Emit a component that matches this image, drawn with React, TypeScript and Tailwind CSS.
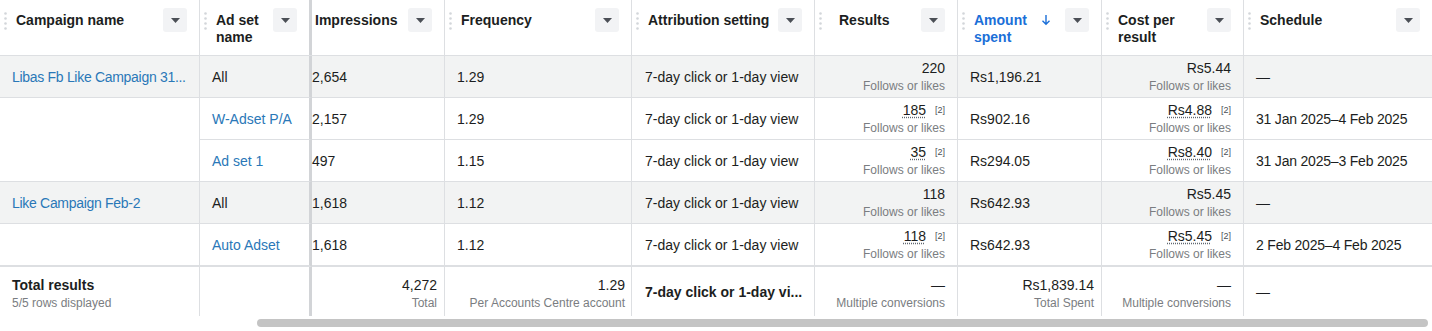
import React from 'react';

type Row = {
  camp: string;
  adset: string;
  link: boolean;
  gray: boolean;
  imp: string;
  freq: string;
  res: string;
  cpr: string;
  amt: string;
  sched: string;
  note: boolean;
  campBorder: boolean;
  last: boolean;
};

const rows: Row[] = [
  { camp: 'Libas Fb Like Campaign 31...', adset: 'All', link: false, gray: true, imp: '2,654', freq: '1.29', res: '220', amt: 'Rs1,196.21', cpr: 'Rs5.44', sched: '—', note: false, campBorder: true, last: false },
  { camp: '', adset: 'W-Adset P/A', link: true, gray: false, imp: '2,157', freq: '1.29', res: '185', amt: 'Rs902.16', cpr: 'Rs4.88', sched: '31 Jan 2025–4 Feb 2025', note: true, campBorder: false, last: false },
  { camp: '', adset: 'Ad set 1', link: true, gray: false, imp: '497', freq: '1.15', res: '35', amt: 'Rs294.05', cpr: 'Rs8.40', sched: '31 Jan 2025–3 Feb 2025', note: true, campBorder: true, last: false },
  { camp: 'Like Campaign Feb-2', adset: 'All', link: false, gray: true, imp: '1,618', freq: '1.12', res: '118', amt: 'Rs642.93', cpr: 'Rs5.45', sched: '—', note: false, campBorder: true, last: false },
  { camp: '', adset: 'Auto Adset', link: true, gray: false, imp: '1,618', freq: '1.12', res: '118', amt: 'Rs642.93', cpr: 'Rs5.45', sched: '2 Feb 2025–4 Feb 2025', note: true, campBorder: true, last: true },
];

// column widths, right border included
const W = {
  camp: 'w-[200px] border-r border-r-[#dddfe2]',
  adset: 'w-[112px] border-r-[3px] border-r-[#d2d4d7]',
  imp: 'w-[133px] border-r border-r-[#dddfe2]',
  freq: 'w-[187px] border-r border-r-[#dddfe2]',
  attr: 'w-[183px] border-r border-r-[#dddfe2]',
  res: 'w-[143px] border-r border-r-[#dddfe2]',
  amt: 'w-[144px] border-r border-r-[#dddfe2]',
  cpr: 'w-[142px] border-r border-r-[#dddfe2]',
  sched: 'w-[188px]',
};

const DragHandle = () => (
  <svg className="absolute left-[4px] top-[12px]" width="3" height="20" viewBox="0 0 3 20" aria-hidden="true">
    {[1.5, 6.5, 11.5, 16.5].map((y) => (
      <circle key={y} cx="1.5" cy={y} r="1.3" fill="#d3d6da" />
    ))}
  </svg>
);

const MenuButton = () => (
  <div className="flex h-6 w-6 shrink-0 items-center justify-center rounded-[3px] bg-[#f2f3f5]">
    <svg width="9" height="5" viewBox="0 0 9 5" aria-hidden="true">
      <path d="M0 0h9L4.5 5z" fill="#4b4f56" />
    </svg>
  </div>
);

function HeaderCell({ w, label, handle = true, pad = 'pl-4', blue = false, sorted = false }: { w: string; label: string; handle?: boolean; pad?: string; blue?: boolean; sorted?: boolean }) {
  return (
    <div className={`relative flex h-full shrink-0 items-start ${w} ${pad} pr-3 pt-2`}>
      {handle && <DragHandle />}
      <div className={`mt-[4px] min-w-0 flex-1 pr-2 text-[14px] font-bold leading-[17px] ${blue ? 'text-[#1b6fd8]' : 'text-[#1c1e21]'}`}>{label}</div>
      {sorted && (
        <svg className="mr-[14px] mt-[6px] shrink-0" width="10" height="12" viewBox="0 0 10 12" aria-hidden="true">
          <path d="M5 1v9M1.5 6.8L5 10.3l3.5-3.5" fill="none" stroke="#1b6fd8" strokeWidth="1.4" />
        </svg>
      )}
      <MenuButton />
    </div>
  );
}

function Metric({ value, note, sub }: { value: string; note: boolean; sub: string }) {
  return (
    <div className="flex flex-col items-end">
      <div className="flex items-center leading-[17px]">
        <span className={note ? 'underline decoration-dotted decoration-[#606770] underline-offset-[2px]' : ''}>{value}</span>
        {note && <span className="ml-[9px] mb-[2px] text-[9px] leading-[10px] text-[#4b4f56]">[2]</span>}
      </div>
      <div className="text-[12px] leading-[18px] text-[#7a7d81]">{sub}</div>
    </div>
  );
}

function FootCell({ w, value, sub, pr = 'pr-[7px]' }: { w: string; value: string; sub: string; pr?: string }) {
  return (
    <div className={`flex h-full shrink-0 flex-col items-end pl-3 ${pr} pt-[10px] ${w}`}>
      <div className="text-[14px] leading-[17px] text-[#1c1e21]">{value}</div>
      <div className="whitespace-nowrap text-[12px] leading-[18px] text-[#7a7d81]">{sub}</div>
    </div>
  );
}

export default function App() {
  return (
    <div className="h-[331px] w-[1432px] overflow-hidden bg-white font-['Liberation_Sans',Arial,sans-serif] text-[14px] text-[#1c1e21]">
      {/* header */}
      <div className="flex h-[56px] border-b border-[#dddfe2]">
        <HeaderCell w={W.camp} label="Campaign name" />
        <HeaderCell w={W.adset} label="Ad set name" />
        <HeaderCell w={W.imp} label="Impressions" handle={false} pad="pl-[3px]" />
        <HeaderCell w={W.freq} label="Frequency" />
        <HeaderCell w={W.attr} label="Attribution setting" />
        <HeaderCell w={W.res} label="Results" pad="pl-6" />
        <HeaderCell w={W.amt} label="Amount spent" blue sorted />
        <HeaderCell w={W.cpr} label="Cost per result" />
        <HeaderCell w={W.sched} label="Schedule" />
      </div>

      {/* rows */}
      {rows.map((r, i) => {
        const b = r.last ? 'h-[43px] border-b-2 border-b-[#dddfe2]' : 'h-[42px] border-b border-b-[#dddfe2]';
        const bg = r.gray ? 'bg-[#f2f3f3]' : 'bg-white';
        const cell = `flex shrink-0 items-center pt-[2px] ${b}`;
        return (
          <div key={i} className={`flex ${bg}`}>
            <div className={`flex shrink-0 items-center overflow-hidden whitespace-nowrap px-3 pt-[2px] tracking-[-0.3px] text-[#2a78b8] ${W.camp} ${r.last ? 'h-[43px]' : 'h-[42px]'} ${r.campBorder ? (r.last ? 'border-b-2 border-b-[#dddfe2]' : 'border-b border-b-[#dddfe2]') : ''}`}>
              {r.camp}
            </div>
            <div className={`${cell} px-3 ${W.adset} ${r.link ? 'text-[#2a78b8]' : ''}`}>{r.adset}</div>
            <div className={`${cell} pl-0 ${W.imp}`}>{r.imp}</div>
            <div className={`${cell} px-3 ${W.freq}`}>{r.freq}</div>
            <div className={`${cell} pl-[13px] ${W.attr}`}>7-day click or 1-day view</div>
            <div className={`${cell} justify-end px-3 ${W.res}`}>
              <Metric value={r.res} note={r.note} sub="Follows or likes" />
            </div>
            <div className={`${cell} px-3 ${W.amt}`}>{r.amt}</div>
            <div className={`${cell} justify-end px-3 ${W.cpr}`}>
              <Metric value={r.cpr} note={r.note} sub="Follows or likes" />
            </div>
            <div className={`${cell} px-3 tracking-[-0.2px] ${W.sched}`}>{r.sched}</div>
          </div>
        );
      })}

      {/* totals */}
      <div className="flex h-[49px]">
        <div className={`flex h-full shrink-0 flex-col px-3 pt-[10px] ${W.camp}`}>
          <div className="text-[14px] font-bold leading-[17px]">Total results</div>
          <div className="text-[12px] leading-[18px] text-[#7a7d81]">5/5 rows displayed</div>
        </div>
        <div className={`h-full shrink-0 ${W.adset}`} />
        <FootCell w={W.imp} value="4,272" sub="Total" />
        <FootCell w={W.freq} value="1.29" sub="Per Accounts Centre account" pr="pr-[6px]" />
        <div className={`flex h-full shrink-0 items-center overflow-hidden whitespace-nowrap pl-[13px] pt-[2px] font-bold ${W.attr}`}>
          7-day click or 1-day vi...
        </div>
        <FootCell w={W.res} value="—" sub="Multiple conversions" pr="pr-3" />
        <FootCell w={W.amt} value="Rs1,839.14" sub="Total Spent" />
        <FootCell w={W.cpr} value="—" sub="Multiple conversions" pr="pr-3" />
        <div className={`flex h-full shrink-0 items-center px-3 pt-[2px] ${W.sched}`}>—</div>
      </div>

      {/* horizontal scrollbar */}
      <div className="relative h-[16px]">
        <div className="absolute left-[257px] top-[3px] h-[8px] w-[1171px] rounded-full bg-[#c4c4c4]" />
      </div>
    </div>
  );
}
